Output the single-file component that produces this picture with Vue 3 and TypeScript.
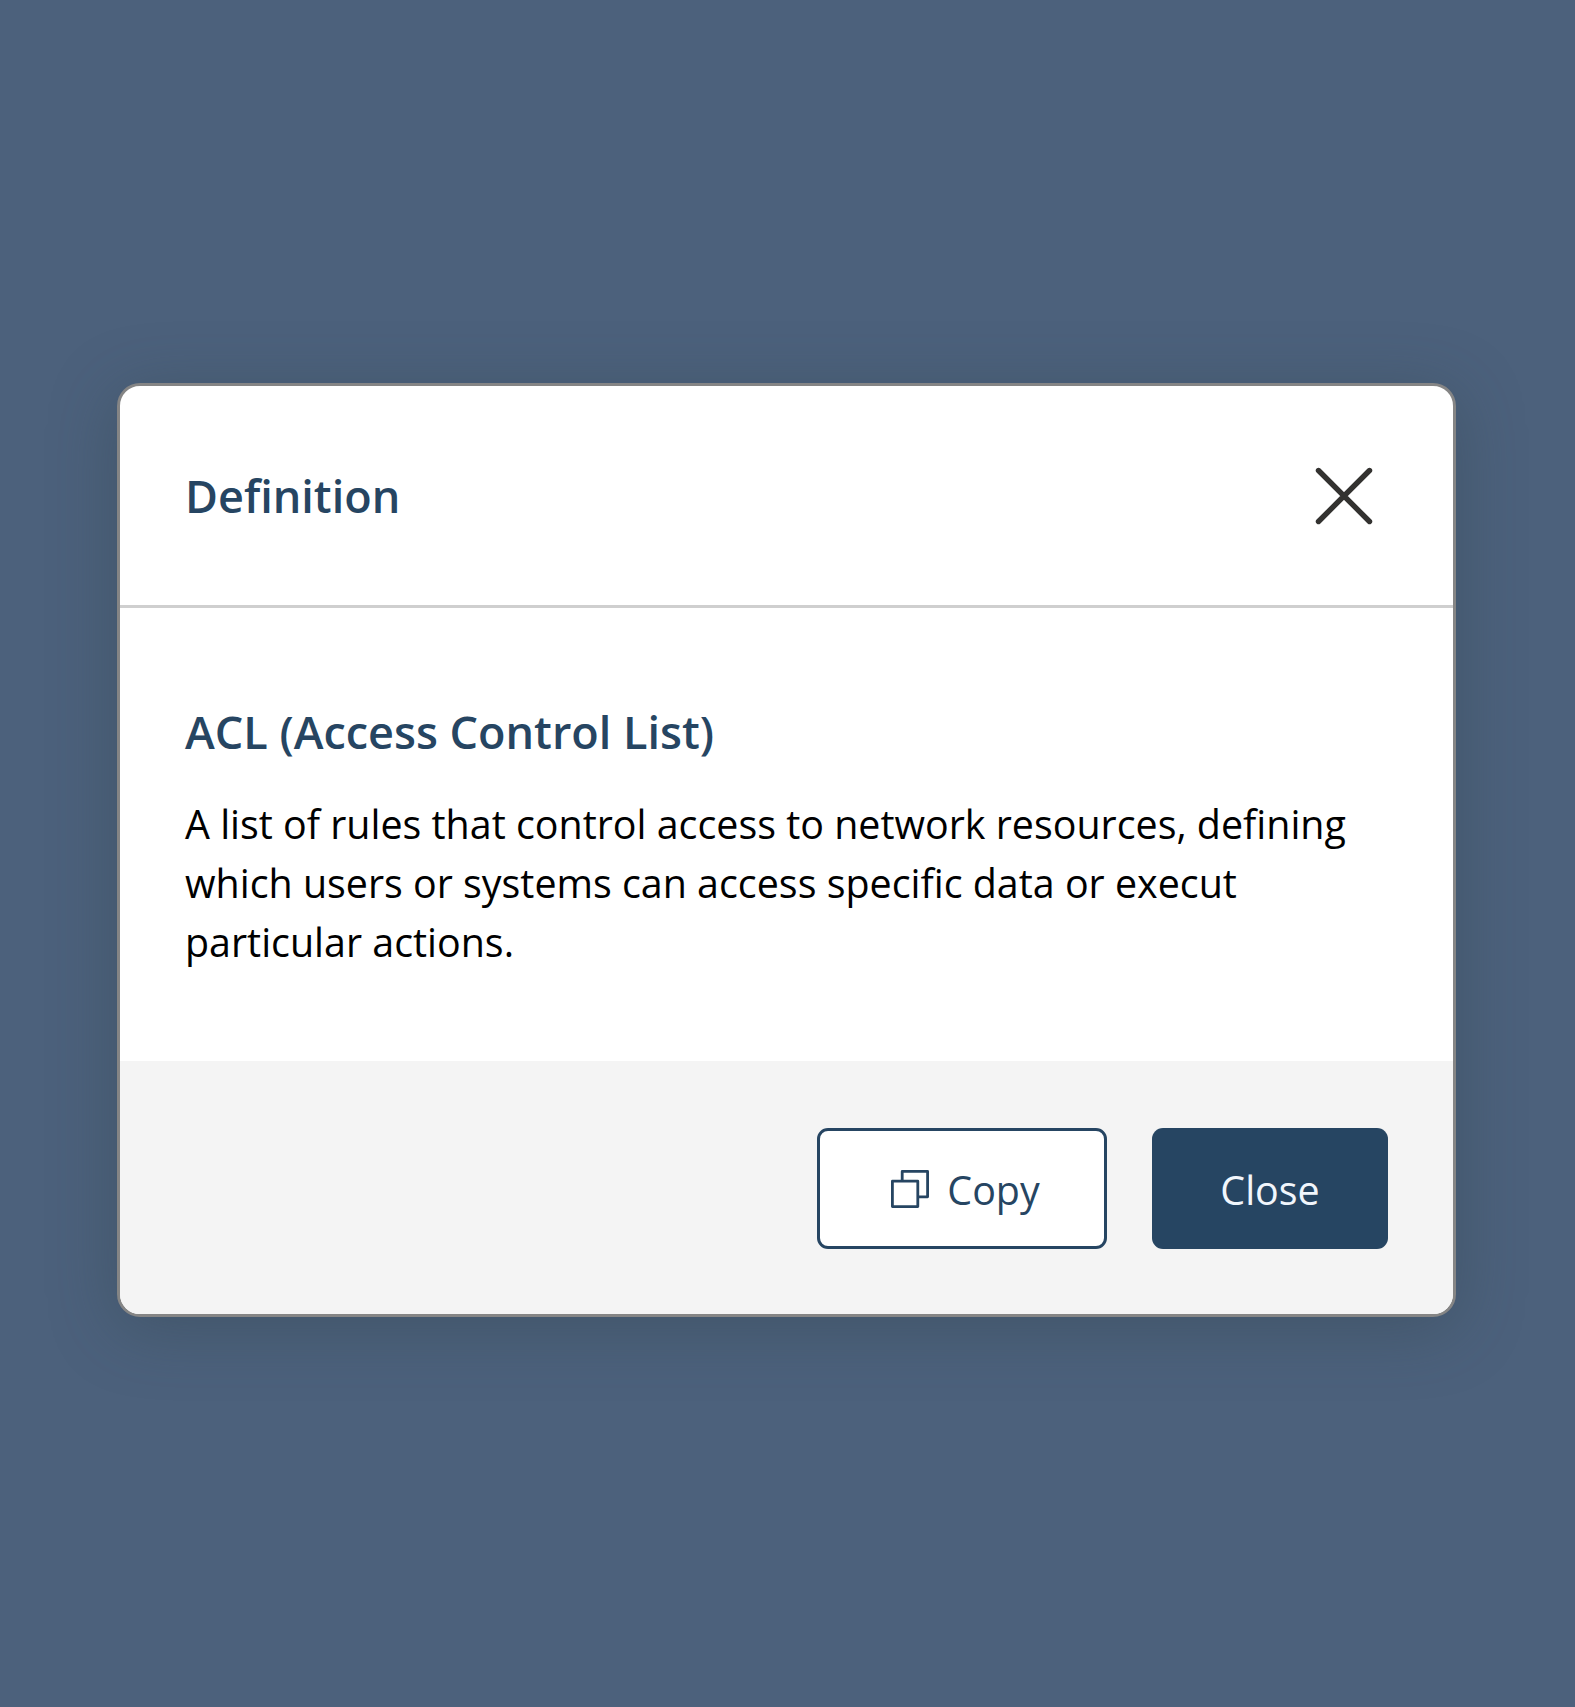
<script setup lang="ts">
import { ref } from 'vue'

interface Definition {
  term: string
  lines: string[]
}

const open = ref(true)

const definition: Definition = {
  term: 'ACL (Access Control List)',
  lines: [
    'A list of rules that control access to network resources, defining',
    'which users or systems can access specific data or execut',
    'particular actions.',
  ],
}

function copy(): void {
  navigator.clipboard?.writeText(`${definition.term}\n${definition.lines.join(' ')}`)
}

function close(): void {
  open.value = false
}
</script>

<template>
  <main class="backdrop">
    <section v-if="open" class="dialog" role="dialog" aria-labelledby="dialog-title">
      <header class="header">
        <h1 id="dialog-title" class="title">Definition</h1>
        <button class="dismiss" type="button" aria-label="Close dialog" @click="close">
          <svg width="58" height="58" viewBox="0 0 58 58" fill="none" stroke="#333230" stroke-width="5.4" stroke-linecap="round">
            <path d="M3.5 3.5L54.5 54.5M54.5 3.5L3.5 54.5" />
          </svg>
        </button>
      </header>
      <div class="body">
        <h2 class="term">{{ definition.term }}</h2>
        <p class="text">
          <span v-for="line in definition.lines" :key="line" class="line">{{ line }}</span>
        </p>
      </div>
      <footer class="footer">
        <button class="btn btn-copy" type="button" @click="copy">
          <svg width="38" height="38" viewBox="0 0 38 38" fill="none" stroke="#264562" stroke-width="2.8" stroke-linejoin="round">
            <path d="M1.4 11.2H26.8V36.6H1.4Z" />
            <path d="M11.2 11.2V1.4H36.6V26.8H26.8" />
          </svg>
          <span class="label">Copy</span>
        </button>
        <button class="btn btn-close" type="button" @click="close"><span class="label">Close</span></button>
      </footer>
    </section>
  </main>
</template>

<style>
body {
  margin: 0;
  background: #4c617c;
}
</style>

<style scoped>
.backdrop {
  box-sizing: border-box;
  height: 1707px;
  padding: 383px 0 0 117px;
  background: #4c617c;
  font-family: "Open Sans", sans-serif;
  overflow: hidden;
}

.dialog {
  box-sizing: border-box;
  display: flex;
  flex-direction: column;
  width: 1339px;
  height: 934px;
  border: 3px solid #858585;
  border-radius: 23px;
  background: #fff;
  box-shadow: 0 11px 66px rgba(48, 66, 74, 0.38);
  overflow: hidden;
}

.header {
  box-sizing: border-box;
  display: flex;
  align-items: center;
  justify-content: space-between;
  height: 222px;
  padding: 0 80.5px 0 65px;
  border-bottom: 3px solid #cfcfcf;
}

.title,
.term {
  margin: 0;
  color: #264562;
  font-size: 45px;
  font-weight: 600;
  line-height: 60px;
}

.dismiss {
  display: flex;
  padding: 0;
  border: 0;
  background: none;
}

.body {
  box-sizing: border-box;
  height: 453px;
  padding: 94px 65px 0;
}

.text {
  margin: 33px 0 0;
  color: #000;
  font-size: 39.4px;
  line-height: 59.2px;
}

.line {
  display: block;
  white-space: nowrap;
}

.footer {
  box-sizing: border-box;
  display: flex;
  justify-content: flex-end;
  gap: 45px;
  flex: 1;
  padding: 67px 65px 0 0;
  background: #f4f4f4;
}

.btn {
  box-sizing: border-box;
  display: flex;
  align-items: center;
  justify-content: center;
  height: 121px;
  padding: 0;
  border-radius: 11px;
  font-family: inherit;
  font-size: 39.4px;
}

.label {
  padding-top: 2px;
}

.btn-copy {
  gap: 18px;
  width: 290px;
  padding-left: 7px;
  border: 3px solid #264562;
  background: #fff;
  color: #264562;
}

.btn-close {
  width: 236px;
  border: 0;
  background: #264562;
  color: #f1f6fc;
}
</style>
